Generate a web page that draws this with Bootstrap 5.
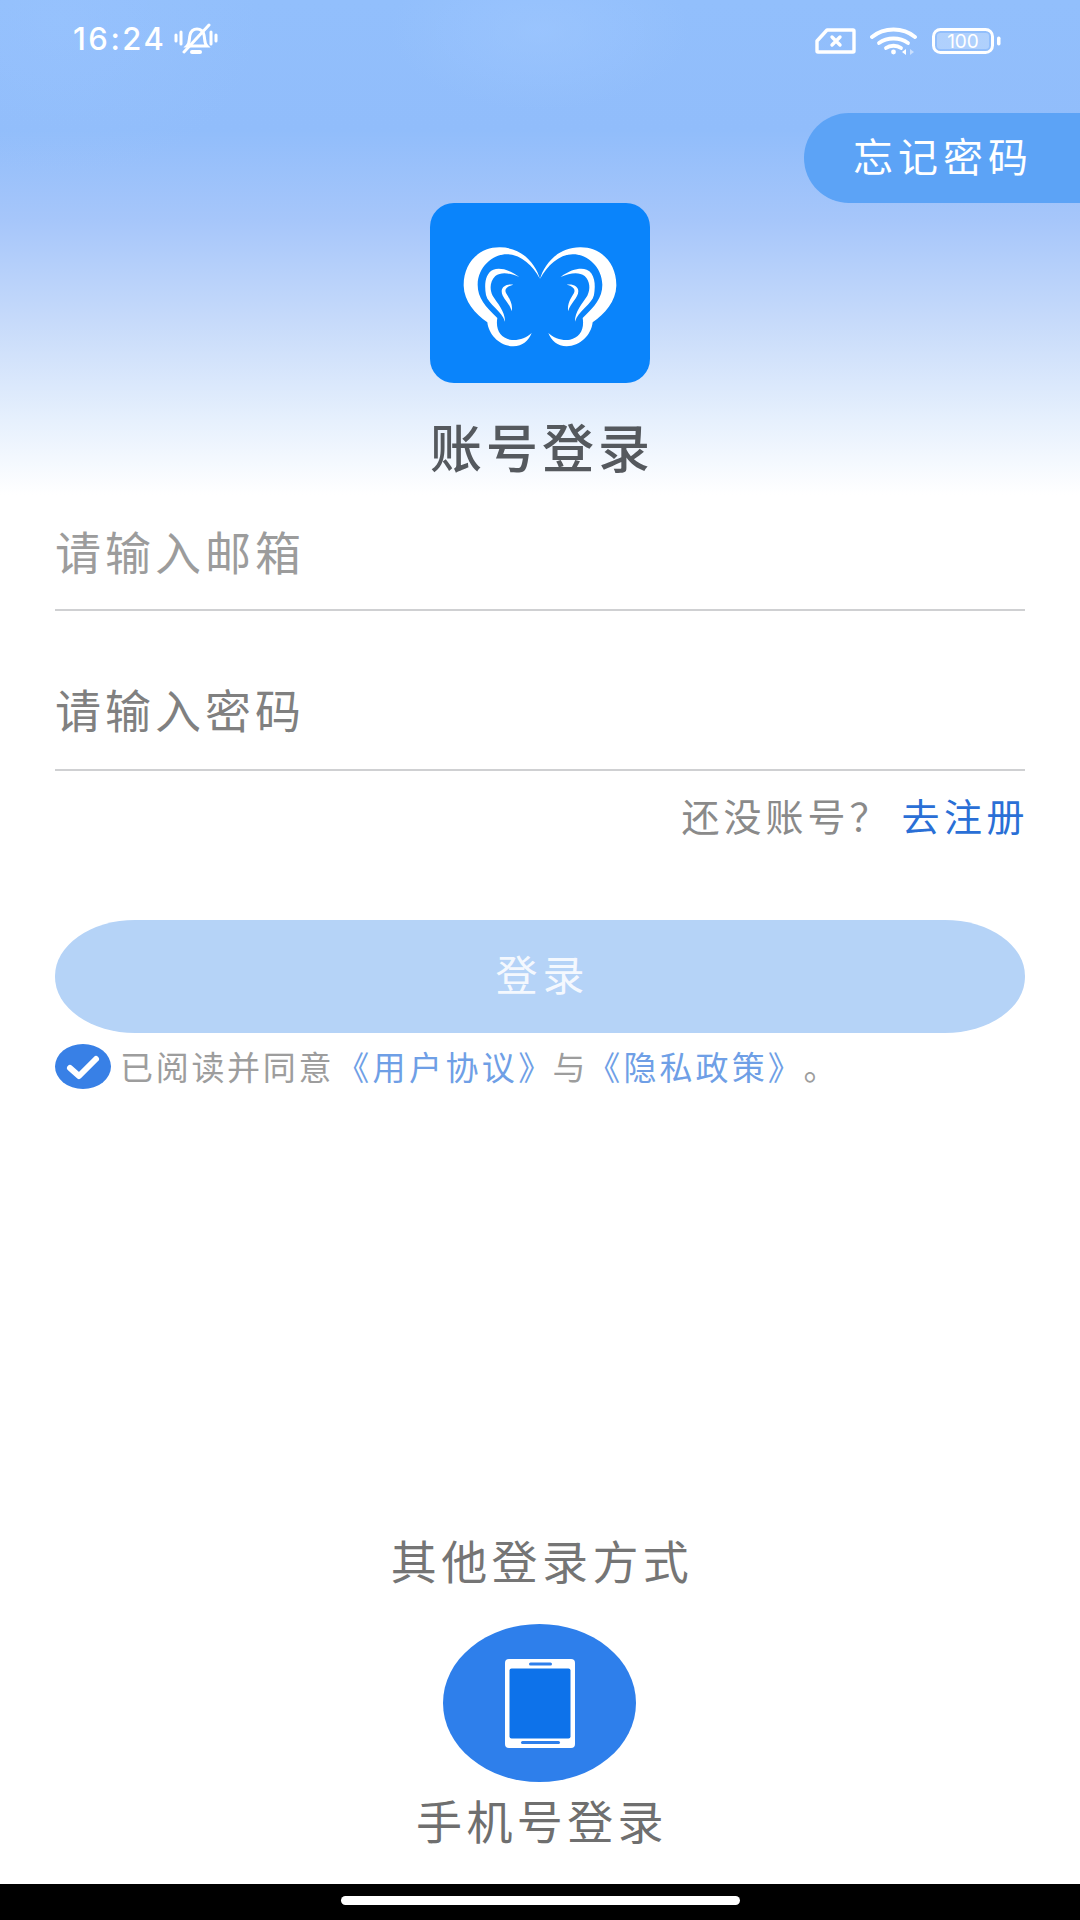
<!DOCTYPE html>
<html lang="zh-CN">
<head>
  <meta charset="UTF-8" />
  <meta name="viewport" content="width=device-width, initial-scale=1" />
  <title>账号登录</title>
  <link href="https://cdn.jsdelivr.net/npm/bootstrap@5.3.0/dist/css/bootstrap.min.css" rel="stylesheet" />
  <style>
    body {
      width: 1080px;
      height: 1920px;
      overflow: hidden;
      background: #fff;
      font-family: "Noto Sans CJK SC", "Liberation Sans", sans-serif;
    }
    .pagina {
      height: 1884px;
      background:
        radial-gradient(ellipse 150px 80px at 540px 30px, rgba(160, 200, 255, .55), rgba(160, 200, 255, 0)),
        radial-gradient(ellipse 200px 160px at 60px 20px, rgba(160, 200, 255, .3), rgba(160, 200, 255, 0)),
        linear-gradient(180deg, #92bffc 0, #91bdfb 130px, #a6c6fa 220px, #c6dafa 320px, #e6f0fd 420px, #fff 495px);
    }
    .barra-status { height: 113px; padding: 23px 79px 0 73px; color: #fff; }
    .hora { font-family: Inter, sans-serif; font-size: 31px; font-weight: 500; line-height: 30px; letter-spacing: 2.5px; }
    .icones-direita { padding-top: 4px; gap: 14px; }
    .esqueci {
      width: 276px;
      height: 90px;
      background: #5ca3f6;
      color: #fff;
      font-size: 40px;
      line-height: 48px;
      letter-spacing: 5px;
      padding: 0 0 6px 49px;
      border: 0;
      border-radius: 45px 0 0 45px / 45px 0 0 45px;
      text-align: left;
    }
    .logo-app { width: 220px; height: 180px; border-radius: 24px; background: #0a84fb; display: block; }
    .titulo { font-size: 52px; font-weight: 500; letter-spacing: 4px; padding-left: 4px; color: #55595e; line-height: 60px; margin: 33px 0 0; }
    .area-form { padding: 0 55px; margin-top: -1px; }
    .campo {
      height: 160px;
      padding: 42px 0 6px;
      border: 0;
      border-bottom: 2px solid #cfd0d2;
      border-radius: 0;
      background: transparent;
      font-size: 46px;
      letter-spacing: 4px;
      box-shadow: none;
    }
    .campo::placeholder { color: #9c9c9c; opacity: 1; }
    .campo.escuro::placeholder { color: #808080; }
    .campo-email { height: 136px; padding: 15px 0 0; }
    .registro { height: 86px; font-size: 38px; color: #8a8a8a; letter-spacing: 4px; }
    .registro a { color: #2a6fd6; text-decoration: none; margin-left: 10px; letter-spacing: 4.5px; margin-right: -4px; }
    .btn-entrar {
      height: 113px;
      margin-top: 63px;
      padding: 0 0 8px 5px;
      background: #b5d3f7;
      border: 0;
      border-radius: 80px / 56px;
      color: #f4f8fe;
      font-size: 42px;
      line-height: 48px;
      letter-spacing: 5px;
    }
    .acordo { margin-top: 11px; height: 45px; font-size: 33px; letter-spacing: 2.7px; color: #9d9d9d; line-height: 45px; white-space: nowrap; }
    .acordo a { color: #6f9fe6; text-decoration: none; letter-spacing: 3.4px; }
    .acordo a.primeiro { margin-left: 2px; margin-right: -2px; }
    .acordo a.segundo { margin-left: -1px; letter-spacing: 3.1px; }
    .acordo .ponto { margin-left: 16px; }
    .acordo svg { margin-right: 9px; }
    .outros { margin-top: 440px; }
    .outros-titulo { font-size: 46px; letter-spacing: 4.4px; padding-left: 4px; color: #757575; line-height: 60px; }
    .telefone { margin: 35px 2px 0 0; display: block; }
    .telefone-texto { font-size: 46px; letter-spacing: 4.4px; padding-left: 4px; color: #6f6f6f; line-height: 60px; margin-top: 7px; }
    .rodape { height: 36px; background: #000; }
    .home { width: 399px; height: 9px; border-radius: 5px; background: #fff; }
  </style>
</head>
<body>
  <div class="pagina d-flex flex-column">
    <div class="barra-status d-flex justify-content-between align-items-start">
      <div class="d-flex align-items-center gap-2">
        <span class="hora">16:24</span>
        <svg width="44" height="32" viewBox="0 0 44 32" fill="none" stroke="#fff" stroke-width="3" stroke-linecap="round">
          <path d="M2 12v6M7 9v12M37 9v12M42 12v6" />
          <path d="M13 23c3-3 2-7 3-11 1-4 4-6 7-6s6 2 7 6c1 4 0 8 3 11z" />
          <path d="M10 29 35 2" />
          <path d="M18 29h8" stroke-width="4" />
        </svg>
      </div>
      <div class="icones-direita d-flex align-items-center">
        <svg width="41" height="26" viewBox="0 0 41 26" fill="none" stroke="#fff" stroke-width="3.4" stroke-linejoin="round" stroke-linecap="round">
          <path d="M12 2h26a1 1 0 0 1 1 1v20a1 1 0 0 1-1 1H3a1 1 0 0 1-1-1v-10z" />
          <path d="M17 9l8 8M25 9l-8 8" />
        </svg>
        <svg width="48" height="28" viewBox="0 0 48 28" fill="none" stroke="#fff" stroke-width="3.8" stroke-linecap="round">
          <path d="M2 10c12-10 31-10 43 0" />
          <path d="M9 16c8-6 21-6 29 0" />
          <path d="M16 21c4-3 11-3 15 0" />
          <circle cx="23.5" cy="25" r="2.4" fill="#fff" stroke="none" />
          <path d="M36 22l-4 3 4 3z" fill="#fff" stroke="none" />
          <path d="M40 22l4 3-4 3z" fill="#fff" fill-opacity=".5" stroke="none" />
        </svg>
        <svg width="69" height="26" viewBox="0 0 69 26" fill="none">
          <rect x="1.5" y="1.5" width="59" height="23" rx="7" stroke="#fff" stroke-width="3" />
          <rect x="5" y="5" width="52" height="16" rx="3" fill="#fff" fill-opacity=".28" />
          <rect x="65" y="8.5" width="3.5" height="9" rx="1.7" fill="#fff" />
          <text x="31" y="20" font-family="Inter, sans-serif" font-size="19" fill="#fff" text-anchor="middle">100</text>
        </svg>
      </div>
    </div>

    <div class="d-flex justify-content-end" style="height: 90px">
      <button type="button" class="btn esqueci">忘记密码</button>
    </div>

    <div class="d-flex flex-column align-items-center">
      <svg class="logo-app" viewBox="60 40 660 540">
        <g id="orelha" fill="#fff">
          <path d="M390 268C378 226 340 174 270 173 205 172 160 222 161 288 162 335 196 372 232 398 236 436 270 470 310 470 338 470 356 452 365 430 348 446 322 454 300 450 272 444 256 420 262 385 226 350 203 325 203 285 204 232 248 193 292 194 334 195 368 228 390 268Z" />
          <path d="M328 262C296 238 268 234 250 240 226 250 222 284 228 316 234 344 276 364 285 396 286 366 262 340 248 318 238 298 240 274 256 259 274 246 300 250 328 262Z" />
          <path d="M310 285C290 282 276 290 275 304 275 326 300 340 305 365 310 342 296 324 288 310 282 298 292 289 310 285Z" />
        </g>
        <use href="#orelha" transform="translate(780 0) scale(-1 1)" />
      </svg>
      <h1 class="titulo">账号登录</h1>
    </div>

    <form class="area-form d-flex flex-column">
      <input class="form-control campo campo-email" type="text" placeholder="请输入邮箱" />
      <input class="form-control campo escuro" type="password" placeholder="请输入密码" />
      <div class="registro d-flex justify-content-end align-items-center">还没账号？<a href="#">去注册</a></div>
      <button type="button" class="btn btn-entrar w-100">登录</button>
      <div class="acordo d-flex align-items-center">
        <svg width="56" height="45" viewBox="0 0 56 45">
          <ellipse cx="28" cy="22.5" rx="28" ry="22.5" fill="#3880e6" />
          <path d="M15 24l9 8 17-17" fill="none" stroke="#fff" stroke-width="6" stroke-linecap="round" stroke-linejoin="round" />
        </svg>
        <span>已阅读并同意<a class="primeiro" href="#">《用户协议》</a>与<a class="segundo" href="#">《隐私政策》</a><span class="ponto">。</span></span>
      </div>
    </form>

    <div class="outros d-flex flex-column align-items-center">
      <div class="outros-titulo">其他登录方式</div>
      <svg class="telefone" width="193" height="158" viewBox="0 0 193 158">
        <ellipse cx="96.5" cy="79" rx="96.5" ry="79" fill="#2e7feb" />
        <rect x="62" y="35" width="70" height="89" rx="4" fill="#fff" />
        <rect x="66.5" y="44.5" width="61" height="70" rx="2" fill="#0d72ea" />
        <rect x="86" y="38.5" width="23" height="3" rx="1.5" fill="#2e7feb" />
        <rect x="78" y="117" width="39" height="3" rx="1.5" fill="#2e7feb" />
      </svg>
      <div class="telefone-texto">手机号登录</div>
    </div>
  </div>
  <div class="rodape d-flex justify-content-center pt-2">
    <div class="home mt-1"></div>
  </div>

  <script src="https://cdn.jsdelivr.net/npm/bootstrap@5.3.0/dist/js/bootstrap.bundle.min.js"></script>
</body>
</html>
